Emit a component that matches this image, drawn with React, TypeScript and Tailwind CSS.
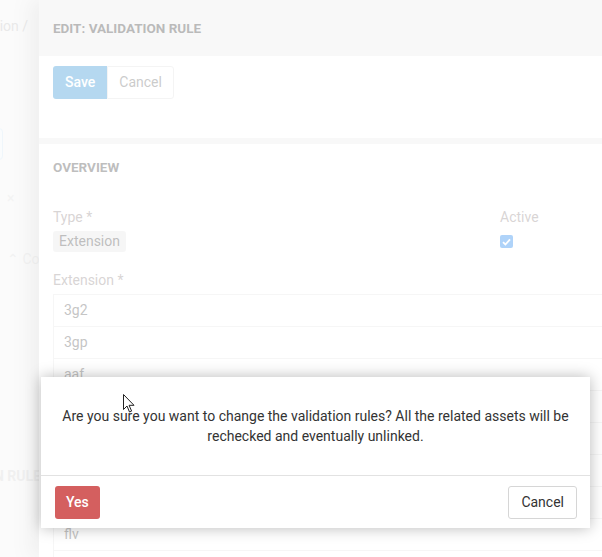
import React from "react";

const extensions = ["3g2", "3gp", "aaf", "aif", "asf", "avi", "flac", "flv", "m4a"];

const App: React.FC = () => {
  return (
    <div className="relative w-[602px] h-[557px] overflow-hidden bg-[#f3f3f3] font-['Roboto',sans-serif] flex">
      {/* page behind the drawer, mostly hidden */}
      <div className="w-[39px] shrink-0 overflow-hidden flex flex-col items-end whitespace-nowrap">
        <div className="h-[52px] shrink-0 flex items-center mr-[11px] text-[14px] text-[#c4c4c4]">
          Validation /
        </div>
        <div className="mt-[76px] mr-[36px] w-[160px] h-[32px] shrink-0 border border-[#d6e8f5] bg-[#f1f6fa] rounded" />
        <div className="self-start mt-[28px] pl-[7px] text-[14px] text-[#e0e0e0]">×</div>
        <div className="self-start mt-[40px] pl-[7px] text-[14px] text-[#dcdcdc]">⌃ Conditions</div>
        <div className="mt-[196px] -mr-[2px] text-[14px] font-bold text-[#d8d8d8]">VALIDATION RULE</div>
      </div>

      {/* drawer */}
      <div className="w-[620px] shrink-0 bg-white shadow-[-8px_0_18px_rgba(0,0,0,0.12)]">
        <div className="h-[56px] bg-[#ececec] flex items-center px-[14px]">
          <h1 className="text-[13.5px] font-bold uppercase text-[#4a4a4a]">
            Edit: Validation rule
          </h1>
        </div>

        <div className="h-[82px] px-[14px] pt-[10px]">
          <div className="inline-flex">
            <button className="h-[33px] px-[12px] bg-[#3d9ad8] text-white text-[14px] font-medium rounded-l-[3px]">
              Save
            </button>
            <button className="h-[33px] px-[11px] border border-[#e2e2e2] text-[#777] text-[14px] rounded-r-[3px]">
              Cancel
            </button>
          </div>
        </div>

        <div className="h-[6px] bg-[#ececec]" />

        <div className="px-[14px]">
          <h2 className="mt-[13px] text-[13.5px] font-bold uppercase text-[#555]">Overview</h2>

          <div className="mt-[31px] grid grid-cols-[447px_1fr]">
            <div>
              <div className="text-[14px] text-[#9a9090] leading-[18px]">Type *</div>
              <span className="inline-block mt-[5px] px-[6px] h-[21px] leading-[21px] bg-[#e8e8e8] rounded-[3px] text-[14px] text-[#555]">
                Extension
              </span>
            </div>
            <div>
              <div className="text-[14px] text-[#9a9090] leading-[18px]">Active</div>
              <span className="mt-[9px] w-[13px] h-[13px] rounded-[2px] bg-[#2d8cf0] flex items-center justify-center">
                <svg width="9" height="8" viewBox="0 0 9 8" fill="none">
                  <path d="M1 4.2 L3.4 6.5 L8 1.3" stroke="white" strokeWidth="1.8" />
                </svg>
              </span>
            </div>
          </div>

          <div className="mt-[18px] text-[14px] text-[#9a9090] leading-[18px]">Extension *</div>
          <div className="mt-[5px] border border-[#e6e6e6] border-b-0">
            {extensions.map((ext) => (
              <div
                key={ext}
                className="h-[32px] border-b border-[#e6e6e6] px-[10px] flex items-center text-[14px] text-[#666]"
              >
                {ext}
              </div>
            ))}
          </div>
        </div>
      </div>

      {/* modal backdrop */}
      <div className="absolute inset-0 bg-white/[0.62]" />

      {/* confirm dialog */}
      <div className="absolute left-[41px] top-[377px] w-[549px] bg-white shadow-[0_0_14px_rgba(0,0,0,0.28)] text-[14px] text-[#333]">
        <div className="h-[98px] flex items-center justify-center px-[20px] text-center leading-[20px]">
          Are you sure you want to change the validation rules? All the related assets will be rechecked and eventually unlinked.
        </div>
        <div className="border-t border-[#e2e2e2] h-[53px] flex items-center justify-between pl-[14px] pr-[13px]">
          <button className="h-[33px] px-[11px] bg-[#d45f5f] text-white font-medium rounded-[3px]">
            Yes
          </button>
          <button className="h-[33px] px-[12px] border border-[#d6d6d6] rounded-[3px] text-[#333]">
            Cancel
          </button>
        </div>
      </div>

      {/* mouse pointer */}
      <svg className="absolute left-[123px] top-[394px]" width="13" height="20" viewBox="0 0 13 20">
        <path d="M0.5 0.5 L0.5 15.5 L4 12 L6.5 18 L8.6 17.1 L6.1 11.3 L11 11.3 Z" fill="white" stroke="#222" strokeWidth="1" />
      </svg>
    </div>
  );
};

export default App;
